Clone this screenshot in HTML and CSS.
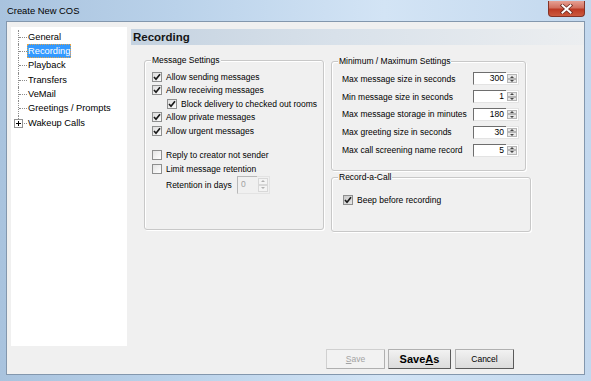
FILE: index.html
```html
<!DOCTYPE html>
<html lang="en">
<head>
    <meta charset="UTF-8">
    <title>Create New COS</title>
    <link rel="stylesheet" href="styles.css">
</head>
<body>
    <div class="window">
        <div class="titlebar">
            <span class="title">Create New COS</span>
            <span class="close">
                <svg width="13" height="10" viewBox="0 0 13 10">
                    <path d="M2.5 1.5 L10.5 8.5 M10.5 1.5 L2.5 8.5" stroke="#6b2a22" stroke-width="3.6" stroke-linecap="square"/>
                    <path d="M2.5 1.5 L10.5 8.5 M10.5 1.5 L2.5 8.5" stroke="#fff" stroke-width="2" stroke-linecap="square"/>
                </svg>
            </span>
        </div>

        <div class="client">
            <div class="top">
                <ul class="tree">
                    <li class="node"><span class="node-text">General</span></li>
                    <li class="node"><span class="node-text selected">Recording</span></li>
                    <li class="node"><span class="node-text">Playback</span></li>
                    <li class="node"><span class="node-text">Transfers</span></li>
                    <li class="node"><span class="node-text">VeMail</span></li>
                    <li class="node"><span class="node-text">Greetings / Prompts</span></li>
                    <li class="node last">
                        <span class="expander">
                            <svg width="9" height="9" viewBox="0 0 9 9">
                                <rect x="0.5" y="0.5" width="8" height="8" fill="#fff" stroke="#919191"/>
                                <path d="M2 4.5 H7 M4.5 2 V7" stroke="#000"/>
                            </svg>
                        </span>
                        <span class="node-text">Wakeup Calls</span>
                    </li>
                </ul>

                <div class="panel">
                    <div class="panel-header">Recording</div>
                    <div class="panel-body">
                        <div class="group msg-group">
                            <span class="group-title">Message Settings</span>
                            <label class="check"><span class="box"><svg viewBox="0 0 8 8"><path d="M1 4 L3 6.2 L7 1.2"/></svg></span>Allow sending messages</label>
                            <label class="check"><span class="box"><svg viewBox="0 0 8 8"><path d="M1 4 L3 6.2 L7 1.2"/></svg></span>Allow receiving messages</label>
                            <label class="check indent"><span class="box"><svg viewBox="0 0 8 8"><path d="M1 4 L3 6.2 L7 1.2"/></svg></span>Block delivery to checked out rooms</label>
                            <label class="check"><span class="box"><svg viewBox="0 0 8 8"><path d="M1 4 L3 6.2 L7 1.2"/></svg></span>Allow private messages</label>
                            <label class="check"><span class="box"><svg viewBox="0 0 8 8"><path d="M1 4 L3 6.2 L7 1.2"/></svg></span>Allow urgent messages</label>

                            <label class="check spaced"><span class="box empty"></span>Reply to creator not sender</label>
                            <label class="check"><span class="box empty"></span>Limit message retention</label>
                            <div class="retention">
                                <span class="retention-label">Retention in days</span>
                                <span class="spin big disabled">
                                    <span class="spin-field">0</span>
                                    <span class="spin-btns"><span class="spin-btn up"></span><span class="spin-btn down"></span></span>
                                </span>
                            </div>
                        </div>

                        <div class="side">
                            <div class="group limits">
                                <span class="group-title">Minimum / Maximum Settings</span>
                                <div class="limit-row">
                                    <span>Max message size in seconds</span>
                                    <span class="spin"><span class="spin-field">300</span><span class="spin-btns"><span class="spin-btn up"></span><span class="spin-btn down"></span></span></span>
                                </div>
                                <div class="limit-row">
                                    <span>Min message size in seconds</span>
                                    <span class="spin"><span class="spin-field">1</span><span class="spin-btns"><span class="spin-btn up"></span><span class="spin-btn down"></span></span></span>
                                </div>
                                <div class="limit-row">
                                    <span>Max message storage in minutes</span>
                                    <span class="spin"><span class="spin-field">180</span><span class="spin-btns"><span class="spin-btn up"></span><span class="spin-btn down"></span></span></span>
                                </div>
                                <div class="limit-row">
                                    <span>Max greeting size in seconds</span>
                                    <span class="spin"><span class="spin-field">30</span><span class="spin-btns"><span class="spin-btn up"></span><span class="spin-btn down"></span></span></span>
                                </div>
                                <div class="limit-row">
                                    <span>Max call screening name record</span>
                                    <span class="spin"><span class="spin-field">5</span><span class="spin-btns"><span class="spin-btn up"></span><span class="spin-btn down"></span></span></span>
                                </div>
                            </div>

                            <div class="group record">
                                <span class="group-title">Record-a-Call</span>
                                <label class="check"><span class="box hot"><svg viewBox="0 0 8 8"><path d="M1 4 L3 6.2 L7 1.2"/></svg></span>Beep before recording</label>
                            </div>
                        </div>
                    </div>
                </div>
            </div>

            <div class="buttons">
                <button class="btn save" disabled><u>S</u>ave</button>
                <button class="btn save-as">Save<u>A</u>s</button>
                <button class="btn cancel">Cancel</button>
            </div>
        </div>
    </div>
</body>
</html>
```

FILE: styles.css
```css
* {
    margin: 0;
    padding: 0;
    box-sizing: border-box;
}

body {
    font-family: "Liberation Sans", Arial, sans-serif;
    font-size: 8.5px;
    color: #000;
    background: #fff;
}

/* window frame */
.window {
    width: 591px;
    height: 381px;
    padding: 0 6px 6px 6px;
    background: linear-gradient(to right, #a9c3de 0%, #bad2ea 30%, #d3e4f5 65%, #c3d8ee 100%);
    display: flex;
    flex-direction: column;
}

.titlebar {
    height: 21px;
    display: flex;
    justify-content: space-between;
    align-items: flex-start;
}

.title {
    font-size: 9.4px;
    padding-left: 1px;
    line-height: 22px;
    color: #000;
}

.close {
    width: 37px;
    height: 16px;
    margin-top: 1px;
    border: 1px solid #843326;
    border-top: none;
    border-radius: 0 0 4px 4px;
    background: linear-gradient(#e6a093 0%, #d2705f 45%, #bd3a24 55%, #cc5a3f 100%);
    display: flex;
    align-items: center;
    justify-content: center;
}

.client {
    flex: 1;
    border: 1px solid #8397ad;
    background: #f0f0f0;
    display: flex;
    flex-direction: column;
}

.top {
    display: flex;
    gap: 4px;
    padding: 5px 0 0 4px;
    height: 324px;
}

/* tree */
.tree {
    list-style: none;
    width: 116px;
    height: 319px;
    background: #fff;
    padding-top: 2.5px;
}

.node {
    position: relative;
    height: 14.4px;
    line-height: 14.4px;
    padding-left: 16px;
    font-size: 9.3px;
}

.node::before {
    content: "";
    position: absolute;
    left: 7px;
    top: 0;
    height: 100%;
    border-left: 1px dotted #8c8c8c;
}

.node.last::before {
    height: 50%;
}

.node::after {
    content: "";
    position: absolute;
    left: 8px;
    top: 7px;
    width: 8px;
    border-top: 1px dotted #8c8c8c;
}

.node-text {
    padding: 0 1px;
    display: inline-block;
    line-height: 14px;
}

.node-text.selected {
    background: #3399ff;
    color: #fff;
    outline: 1px dotted #e0a54c;
    outline-offset: -1px;
}

.expander {
    position: absolute;
    left: 3px;
    top: 3px;
    width: 9px;
    height: 9px;
    z-index: 1;
    display: flex;
}

/* right panel */
.panel {
    flex: 1;
}

.panel-header {
    margin-top: 2px;
    height: 16px;
    line-height: 16px;
    padding-left: 2px;
    font-size: 11.5px;
    font-weight: bold;
    color: #151515;
    background: linear-gradient(to right, #c4d2e0 0%, #d8e1ea 45%, #eceef0 100%);
}

.panel-body {
    display: flex;
    align-items: flex-start;
    padding-left: 13px;
    margin-top: 15px;
}

.group {
    position: relative;
    border: 1px solid #c8c8c8;
    border-radius: 3px;
    box-shadow: inset 1px 1px 0 #fff, 1px 1px 0 #fff;
}

.group-title {
    position: absolute;
    top: -6px;
    left: 6px;
    padding: 0 1px;
    line-height: 11px;
    background: #f0f0f0;
}

.msg-group {
    width: 180px;
    height: 170px;
    padding: 9px 0 0 7px;
}

.check {
    display: flex;
    align-items: center;
    gap: 4px;
    height: 13.5px;
}

.check.indent {
    padding-left: 15px;
}

.check.spaced {
    margin-top: 11px;
}

.box {
    width: 10px;
    height: 10px;
    border: 1px solid #8e8f8f;
    background: linear-gradient(135deg, #dedede, #fbfbfb);
    display: flex;
    align-items: center;
    justify-content: center;
    flex-shrink: 0;
}

.box.empty {
    background: linear-gradient(135deg, #e4e4e4, #ffffff);
}

.box.hot {
    background: linear-gradient(135deg, #c9c9c9, #e6e6e6);
}

.box svg {
    width: 8px;
    height: 8px;
}

.box path {
    fill: none;
    stroke: #1a1a1a;
    stroke-width: 1.7;
}

.retention {
    display: flex;
    align-items: center;
    height: 18px;
    padding-left: 14px;
}

.retention-label {
    width: 71px;
}

/* spin boxes */
.spin {
    display: flex;
    width: 46px;
    height: 13px;
    background: #fff;
}

.spin.big {
    width: 33px;
    height: 18px;
}

.spin-field {
    flex: 1;
    text-align: right;
    padding-right: 2px;
    line-height: 11px;
    border: 1px solid;
    border-color: #6e6e6e #e3e3e3 #e3e3e3 #6e6e6e;
    border-right: none;
}

.spin.big .spin-field {
    text-align: left;
    padding-left: 3px;
    line-height: 15px;
    border-color: #b8b8b8 #e3e3e3 #e3e3e3 #b8b8b8;
}

.spin.disabled {
    background: #f0f0f0;
    color: #a0a0a0;
}

.spin-btns {
    width: 13px;
    display: flex;
    flex-direction: column;
    border: 1px solid #e3e3e3;
    border-left: none;
    padding: 1px;
}

.spin-btn {
    flex: 1;
    position: relative;
    background: #e8e8e8;
    border: 1px solid #b5b5b5;
}

.spin.disabled .spin-btn {
    background: #f4f4f4;
    border-color: #d8d8d8;
}

.spin-btn::after {
    content: "";
    position: absolute;
    left: 50%;
    top: 50%;
    margin-left: -2px;
    border-left: 2px solid transparent;
    border-right: 2px solid transparent;
}

.spin-btn.up::after {
    margin-top: -1px;
    border-bottom: 2px solid #444;
}

.spin-btn.down::after {
    margin-top: -1px;
    border-top: 2px solid #444;
}

.spin.disabled .spin-btn.up::after {
    border-bottom-color: #b0b0b0;
}

.spin.disabled .spin-btn.down::after {
    border-top-color: #b0b0b0;
}

.side {
    margin-left: 7px;
    margin-top: 1px;
    display: flex;
    flex-direction: column;
    gap: 6px;
}

.limits {
    width: 195px;
    height: 110px;
    padding: 8px 6px 0 10px;
}

.limit-row {
    display: flex;
    justify-content: space-between;
    align-items: center;
    height: 17.8px;
}

.record {
    width: 200px;
    height: 55px;
    padding: 15px 0 0 11px;
}

/* bottom buttons */
.buttons {
    display: flex;
    justify-content: flex-end;
    gap: 3px;
    padding-right: 70px;
    margin-top: 3px;
}

.btn {
    width: 59px;
    height: 20px;
    font-family: "Liberation Sans", Arial, sans-serif;
    font-size: 8.5px;
    color: #000;
    background: linear-gradient(#f2f2f2, #e6e6e6 50%, #dcdcdc);
    border: 1px solid;
    border-color: #b0b0b0 #5a5a5a #5a5a5a #b0b0b0;
    border-radius: 1px;
}

.btn u {
    text-decoration: underline;
}

.btn:disabled {
    color: #a3a3a3;
    background: #f2f2f2;
    border-color: #d0d0d0 #b0b0b0 #b0b0b0 #d0d0d0;
}

.btn.save-as {
    width: 63px;
    font-size: 11px;
    font-weight: bold;
}

.btn.cancel {
    margin-left: 1px;
}
```
